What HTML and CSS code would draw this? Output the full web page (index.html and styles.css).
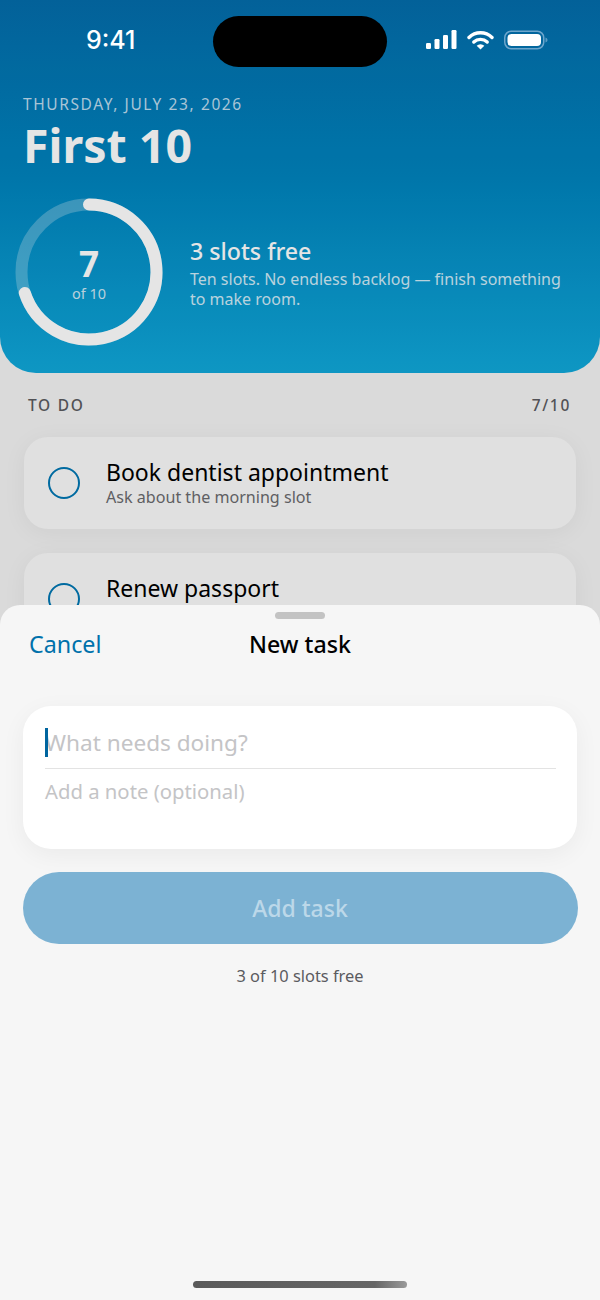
FILE: index.html
```html
<!DOCTYPE html>
<html lang="en">
<head>
<meta charset="utf-8">
<title>First 10</title>
<link rel="stylesheet" href="styles.css">
</head>
<body>
<div class="phone">
  <header class="hero">
    <p class="date">THURSDAY, JULY 23, 2026</p>
    <h1 class="title">First 10</h1>
    <div class="summary">
      <div class="ring">
        <svg class="ring-svg" width="148" height="148" viewBox="0 0 148 148">
          <circle class="ring-track" cx="74" cy="74" r="67.5"/>
          <path class="ring-fill" d="M74 6.5A67.5 67.5 0 1 1 9.8 94.9"/>
        </svg>
        <div class="ring-label">
          <span class="ring-num">7</span>
          <span class="ring-of">of 10</span>
        </div>
      </div>
      <div class="summary-text">
        <div class="slots">3 slots free</div>
        <div class="blurb">Ten slots. No endless backlog — finish something to make room.</div>
      </div>
    </div>
  </header>
  <main class="list">
    <div class="list-head"><span class="list-title">TO DO</span><span class="list-count">7/10</span></div>
    <div class="task">
      <span class="check"></span>
      <div class="task-body">
        <div class="task-name">Book dentist appointment</div>
        <div class="task-note">Ask about the morning slot</div>
      </div>
    </div>
    <div class="task">
      <span class="check"></span>
      <div class="task-body">
        <div class="task-name">Renew passport</div>
        <div class="task-note">Check the expiry date</div>
      </div>
    </div>
  </main>
  <div class="scrim"></div>
  <div class="status">
    <span class="time">9:41</span>
    <span class="island"></span>
    <span class="status-icons">
      <svg width="32" height="20" viewBox="0 0 32 20"><rect x="1" y="13" width="5" height="6" rx="1.2" fill="#fff"/><rect x="9.500" y="9" width="5" height="10" rx="1.2" fill="#fff"/><rect x="18" y="5" width="5" height="14" rx="1.2" fill="#fff"/><rect x="26.500" y="0" width="5" height="19" rx="1.2" fill="#fff"/></svg>
      <svg width="27" height="20" viewBox="0 0 27 20"><path d="M2 7.500a16.400 16.400 0 0 1 23 0" class="wifi"/><path d="M6.800 12a9.800 9.800 0 0 1 13.400 0" class="wifi"/><path d="M13.500 19.600 9.700 15.800a5.500 5.500 0 0 1 7.600 0z" fill="#fff"/></svg>
      <svg width="44" height="20" viewBox="0 0 44 20"><rect x=".75" y="1.250" width="39" height="17.500" rx="6.500" class="batt"/><rect x="3.500" y="4" width="33.500" height="12" rx="4" fill="#fff"/><path d="M41.500 7.500v5c1.300-.4 2-1.300 2-2.500s-.7-2.100-2-2.500z" fill="#5d9cc4"/></svg>
    </span>
  </div>
  <section class="sheet">
    <div class="grabber"></div>
    <div class="sheet-bar">
      <span class="cancel">Cancel</span>
      <span class="sheet-title">New task</span>
      <span class="bar-spacer"></span>
    </div>
    <div class="form">
      <div class="field-main"><span class="caret"></span><span class="ph-main">What needs doing?</span></div>
      <div class="field-note">Add a note (optional)</div>
    </div>
    <div class="add-btn">Add task</div>
    <div class="free">3 of 10 slots free</div>
  </section>
  <div class="home"></div>
</div>
</body>
</html>
```
FILE: styles.css
```css
* { box-sizing: border-box; }
html, body { margin: 0; padding: 0; }
body { font-family: "Noto Sans", "Open Sans", sans-serif; background: #f2f2f2; }
.phone { position: relative; width: 600px; height: 1300px; overflow: hidden; background: #f3f3f3; }

.hero { height: 373px; padding: 94px 24px 0 15px; border-radius: 0 0 36px 36px; background: linear-gradient(180deg, #046dab 0%, #0084be 48%, #10a8da 100%); color: #fff; }
.date { margin: 0 0 0 8px; font-size: 15.500px; line-height: 20px; letter-spacing: 1.600px; color: #bddcee; }
.title { margin: 0 0 0 8px; font-size: 46.500px; line-height: 62px; font-weight: 700; }
.summary { display: flex; align-items: center; gap: 27px; margin-top: 22px; }
.ring { position: relative; width: 148px; height: 148px; flex: none; }
.ring-svg { display: block; }
.ring-track { fill: none; stroke: rgba(255,255,255,.26); stroke-width: 12; }
.ring-fill { fill: none; stroke: #fff; stroke-width: 12; stroke-linecap: round; }
.ring-label { position: absolute; inset: 0; display: flex; flex-direction: column; align-items: center; justify-content: center; }
.ring-num { font-size: 35px; line-height: 38px; font-weight: 700; margin-top: 3px; }
.ring-of { font-size: 14.500px; line-height: 20px; color: #cfe8f5; }
.summary-text { flex: 1; }
.slots { margin-top: 1px; font-size: 23.200px; line-height: 30px; font-weight: 500; }
.blurb { font-size: 16px; line-height: 19.500px; margin-top: 4px; color: #cfeaf7; }

.list { padding: 22px 24px 0; }
.list-head { display: flex; justify-content: space-between; align-items: center; padding: 0 5px 0 4px; height: 20px; font-size: 15.500px; font-weight: 500; color: #5b5b5f; letter-spacing: 1.700px; }
.task { display: flex; align-items: center; gap: 26px; height: 92px; padding: 0 24px; background: #fafafa; border-radius: 24px; box-shadow: 0 4px 24px rgba(0,0,0,.05); }
.list-head + .task { margin-top: 22px; }
.task + .task { margin-top: 24px; }
.check { width: 32px; height: 32px; flex: none; border: 2.500px solid #0077b3; border-radius: 50%; }
.task-body { min-width: 0; padding-bottom: 1px; }
.task-name { font-size: 23px; line-height: 29px; color: #000; }
.task-note { font-size: 16.100px; line-height: 21px; color: #6a6a6e; }

.scrim { position: absolute; inset: 0; background: rgba(0,0,0,.1); }

.status { position: absolute; top: 15px; left: 0; right: 0; height: 52px; }
.time { position: absolute; left: 86px; top: 10px; font-family: Inter, Roboto, sans-serif; font-size: 25px; line-height: 30px; font-weight: 500; color: #fff; }
.island { position: absolute; left: 213px; top: 1px; width: 174px; height: 51px; background: #000; border-radius: 26px; }
.status-icons { position: absolute; left: 425px; top: 15px; display: flex; align-items: center; gap: 10px; }
.status-icons svg { display: block; }
.wifi { fill: none; stroke: #fff; stroke-width: 3.400px; stroke-linecap: round; }
.batt { fill: none; stroke: #6ea6cc; stroke-width: 1.500px; }

.sheet { position: absolute; left: 0; right: 0; top: 605px; bottom: 0; padding: 0 23px; background: #f6f6f6; border-radius: 20px 20px 0 0; }
.grabber { width: 50px; height: 7px; margin: 7px auto 0; background: #c3c3c3; border-radius: 4px; }
.sheet-bar { display: flex; justify-content: space-between; align-items: center; height: 30px; margin-top: 10px; padding-left: 6px; }
.cancel { width: 90px; font-size: 23.300px; color: #0071ab; }
.sheet-title { font-size: 23.200px; font-weight: 500; color: #000; }
.bar-spacer { width: 96px; }
.form { height: 143px; margin-top: 47px; padding: 0 21px 0 22px; background: #fff; border-radius: 28px; box-shadow: 0 6px 24px rgba(0,0,0,.05); }
.field-main { position: relative; height: 63px; padding-top: 21px; border-bottom: 1px solid #e3e3e3; font-size: 22.600px; line-height: 32px; color: #c4c4c6; }
.caret { position: absolute; left: 0; top: 22px; width: 3px; height: 29px; background: #00659f; }
.field-note { padding-top: 8px; font-size: 20.300px; line-height: 28px; color: #c4c4c6; }
.add-btn { height: 72px; margin: 23px -0.5px 0; border-radius: 36px; background: #7cb2d3; color: #bcd8e9; font-size: 23px; font-weight: 500; line-height: 72px; text-align: center; }
.free { margin-top: 21px; font-size: 16.400px; line-height: 22px; text-align: center; color: #5b5b5f; }

.home { position: absolute; left: 193px; top: 1281px; width: 214px; height: 7px; border-radius: 4px; background: linear-gradient(90deg, #5a5a5a 0%, #666 85%, #9a9a9a 100%); }
```
